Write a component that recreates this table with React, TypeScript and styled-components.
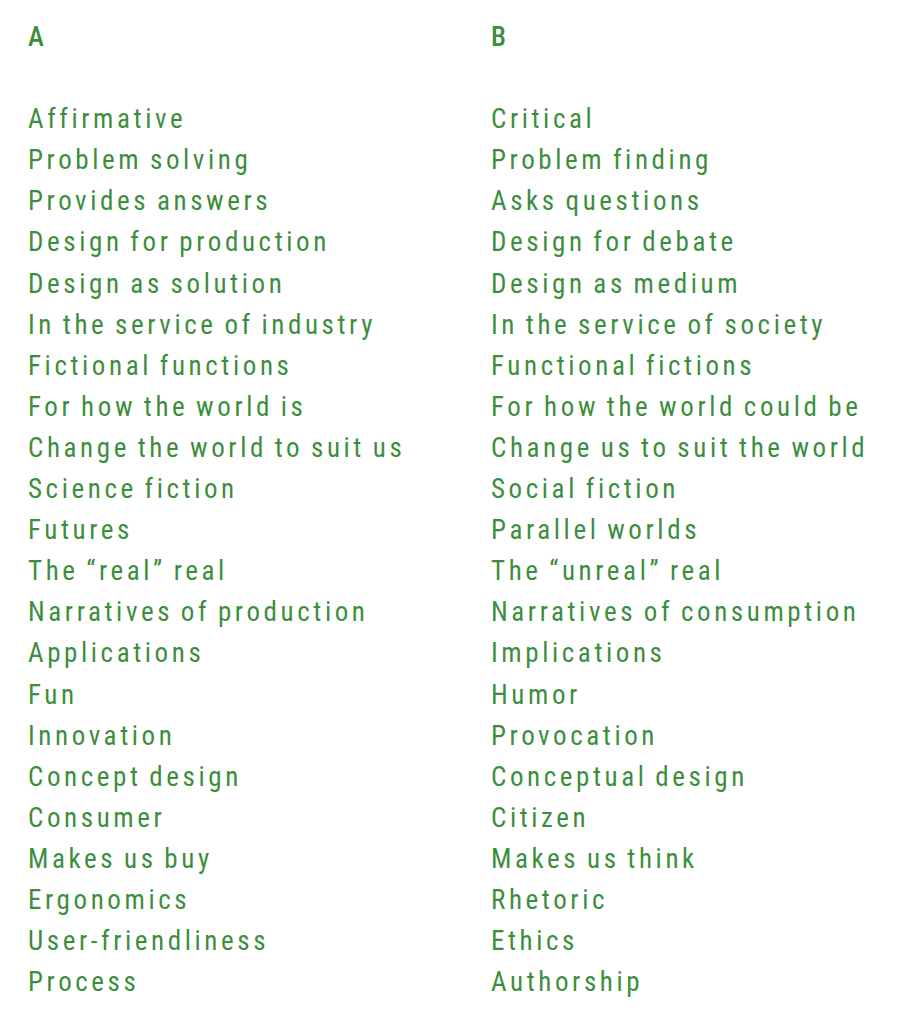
import styled, { createGlobalStyle } from 'styled-components'

const pairs: [string, string][] = [
  ['Affirmative', 'Critical'],
  ['Problem solving', 'Problem finding'],
  ['Provides answers', 'Asks questions'],
  ['Design for production', 'Design for debate'],
  ['Design as solution', 'Design as medium'],
  ['In the service of industry', 'In the service of society'],
  ['Fictional functions', 'Functional fictions'],
  ['For how the world is', 'For how the world could be'],
  ['Change the world to suit us', 'Change us to suit the world'],
  ['Science fiction', 'Social fiction'],
  ['Futures', 'Parallel worlds'],
  ['The \u201creal\u201d real', 'The \u201cunreal\u201d real'],
  ['Narratives of production', 'Narratives of consumption'],
  ['Applications', 'Implications'],
  ['Fun', 'Humor'],
  ['Innovation', 'Provocation'],
  ['Concept design', 'Conceptual design'],
  ['Consumer', 'Citizen'],
  ['Makes us buy', 'Makes us think'],
  ['Ergonomics', 'Rhetoric'],
  ['User-friendliness', 'Ethics'],
  ['Process', 'Authorship'],
]

const columns = [
  { title: 'A', items: pairs.map(([a]) => a) },
  { title: 'B', items: pairs.map(([, b]) => b) },
]

const App = () => {
  return (
    <>
      <GlobalStyle />
      <Table>
        {columns.map(({ title, items }) => (
          <Column key={title}>
            <Heading>{title}</Heading>
            <List>
              {items.map((item) => (
                <Item key={item}>{item}</Item>
              ))}
            </List>
          </Column>
        ))}
      </Table>
    </>
  )
}

const GlobalStyle = createGlobalStyle`
  html, body {
    margin: 0;
    background: #ffffff;
  }
`

const Table = styled.div`
  display: grid;
  grid-template-columns: 463px 1fr;
  padding: 17px 0 0 28px;
  font-family: "Roboto Condensed", Roboto, "Liberation Sans", sans-serif;
  font-size: 27px;
  line-height: 41.1px;
  letter-spacing: 3.6px;
  word-spacing: -2px;
  color: #3c8e3c;
`

const Column = styled.div`
  display: flex;
  flex-direction: column;
`

const Heading = styled.h2`
  margin: 0 0 41.1px;
  font-size: inherit;
  font-weight: 500;
`

const List = styled.ul`
  margin: 0;
  padding: 0;
  list-style: none;
`

const Item = styled.li`
  white-space: nowrap;
`

export default App
